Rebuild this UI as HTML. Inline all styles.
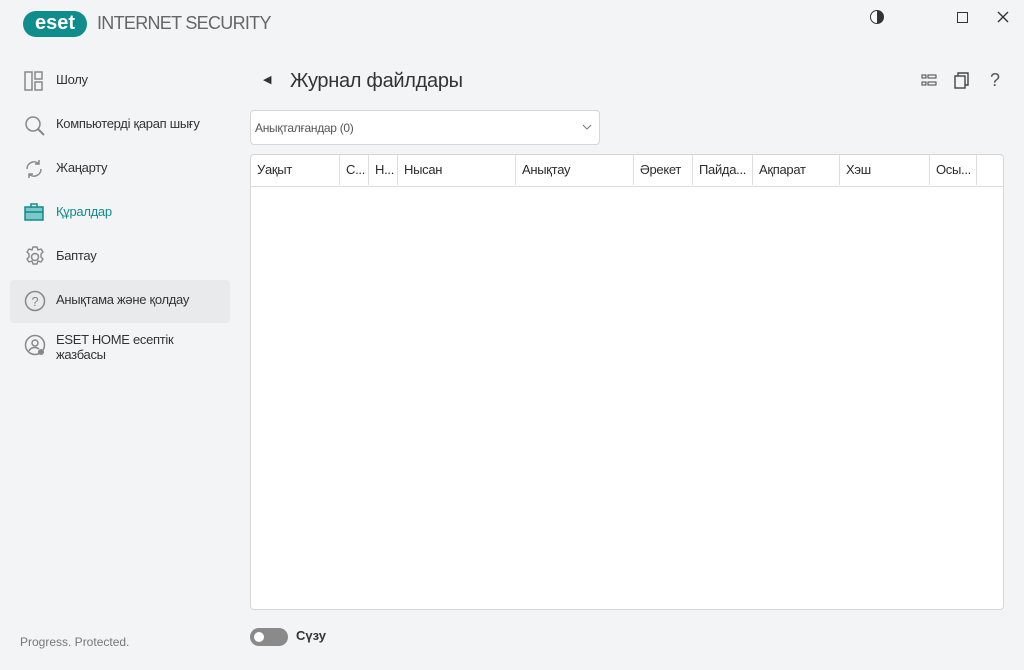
<!DOCTYPE html><html><head><meta charset="utf-8"><style>
body{margin:0;width:1024px;height:670px;background:#f3f4f6;font-family:"Liberation Sans",sans-serif;position:relative;overflow:hidden;color:#2b2b2b}
.a{position:absolute}
.nav{position:absolute;left:56px;font-size:13px;color:#333;letter-spacing:-0.3px}
.ic{position:absolute;left:24px}
.th{position:absolute;top:0;height:30px;line-height:30px;font-size:13px;border-right:1px solid #ddd;padding-left:6px;box-sizing:border-box;overflow:hidden;white-space:nowrap;letter-spacing:-0.3px}
</style></head><body>
<div class="a" style="left:23px;top:11px;width:64px;height:26px;background:#0f8c8c;border-radius:13px;color:#fff;font-weight:bold;font-size:20px;line-height:25px;text-align:center">eset</div>
<div class="a" style="left:97px;top:13px;font-size:18px;color:#666;letter-spacing:-0.7px">INTERNET SECURITY</div>
<div class="a" style="left:870px;top:10px;width:12px;height:12px;border:1.5px solid #333;border-radius:50%;background:linear-gradient(90deg,#fff 50%,#333 50%)"></div>
<div class="a" style="left:957px;top:12px;width:9px;height:9px;border:1.5px solid #333"></div>
<svg class="a" style="left:997px;top:11px" width="12" height="12"><path d="M1 1L11 11M11 1L1 11" stroke="#333" stroke-width="1.4"/></svg>

<svg class="ic" style="top:71px" width="20" height="20"><rect x="1" y="1" width="7" height="18" fill="none" stroke="#888" stroke-width="1.5"/><rect x="11" y="1" width="7" height="7" fill="none" stroke="#888" stroke-width="1.5"/><rect x="11" y="11" width="7" height="8" fill="none" stroke="#888" stroke-width="1.5"/></svg>
<div class="nav" style="top:72px">Шолу</div>
<svg class="ic" style="top:115px" width="22" height="22"><circle cx="9" cy="9" r="7" fill="none" stroke="#888" stroke-width="1.5"/><line x1="14" y1="14" x2="20" y2="20" stroke="#888" stroke-width="2"/></svg>
<div class="nav" style="top:116px">Компьютерді қарап шығу</div>
<svg class="ic" style="top:159px" width="20" height="20"><path d="M3 10a7 7 0 0 1 12-5M17 10a7 7 0 0 1-12 5" fill="none" stroke="#888" stroke-width="1.5"/><path d="M15 1v4h-4M5 19v-4h4" fill="none" stroke="#888" stroke-width="1.5"/></svg>
<div class="nav" style="top:160px">Жаңарту</div>
<svg class="ic" style="top:202px" width="20" height="20"><rect x="1" y="5" width="18" height="13" fill="#7cc8c8" stroke="#0f8c8c" stroke-width="1.5"/><path d="M7 5V2h6v3M1 10h18" fill="none" stroke="#0f8c8c" stroke-width="1.5"/></svg>
<div class="nav" style="top:204px;color:#0f8c8c">Құралдар</div>
<svg class="ic" style="top:246px" width="22" height="22"><path d="M9 1h4l1 3 3-1 2 3-2 2 0 3 2 2-2 3-3-1-1 3h-4l-1-3-3 1-2-3 2-2 0-3-2-2 2-3 3 1z" fill="none" stroke="#888" stroke-width="1.4" stroke-linejoin="round"/><circle cx="11" cy="11" r="3.5" fill="none" stroke="#888" stroke-width="1.5"/></svg>
<div class="nav" style="top:248px">Баптау</div>
<div class="a" style="left:10px;top:280px;width:220px;height:43px;background:#e9eaec;border-radius:4px"></div>
<svg class="ic" style="top:290px" width="22" height="22"><circle cx="11" cy="11" r="9.5" fill="none" stroke="#888" stroke-width="1.5"/><text x="11" y="16" font-size="13" text-anchor="middle" fill="#888" font-family="Liberation Sans">?</text></svg>
<div class="nav" style="top:292px">Анықтама және қолдау</div>
<svg class="ic" style="top:334px" width="22" height="22"><circle cx="11" cy="11" r="9.5" fill="none" stroke="#888" stroke-width="1.5"/><circle cx="11" cy="9" r="3" fill="none" stroke="#888" stroke-width="1.5"/><path d="M5 17a6 5 0 0 1 10-2" fill="none" stroke="#888" stroke-width="1.5"/><circle cx="17" cy="18" r="3" fill="#888"/></svg>
<div class="nav" style="top:332px;line-height:15px">ESET HOME есептік<br>жазбасы</div>
<div class="a" style="left:20px;top:635px;font-size:12px;color:#777">Progress. Protected.</div>

<div class="a" style="left:263px;top:73px;font-size:11px;color:#333">◀</div>
<div class="a" style="left:290px;top:70px;font-size:20px;color:#333;letter-spacing:-0.3px">Журнал файлдары</div>
<svg class="a" style="left:921px;top:74px" width="16" height="14"><rect x="1" y="1" width="4" height="3" fill="none" stroke="#444"/><rect x="7" y="1" width="8" height="3" fill="none" stroke="#444"/><rect x="1" y="8" width="4" height="3" fill="none" stroke="#444"/><rect x="7" y="8" width="8" height="3" fill="none" stroke="#444"/></svg>
<svg class="a" style="left:954px;top:72px" width="16" height="17"><rect x="1" y="4" width="10" height="12" fill="none" stroke="#444" stroke-width="1.4"/><path d="M4 4V1h10v12h-3" fill="none" stroke="#444" stroke-width="1.4"/></svg>
<div class="a" style="left:990px;top:70px;font-size:18px;color:#555">?</div>

<div class="a" style="left:250px;top:110px;width:348px;height:33px;background:#fff;border:1px solid #d6d6d6;border-radius:4px"><span style="position:absolute;left:4px;top:10px;font-size:12px;color:#555;letter-spacing:-0.3px">Анықталғандар (0)</span><svg style="position:absolute;right:7px;top:13px" width="10" height="6"><path d="M1 1L5 5L9 1" fill="none" stroke="#777" stroke-width="1"/></svg></div>

<div class="a" style="left:250px;top:154px;width:752px;height:454px;background:#fff;border:1px solid #d6d6d6;border-radius:4px;overflow:hidden">
<div class="a" style="left:0;top:0;width:752px;height:31px;border-bottom:1px solid #ddd">
<div class="th" style="left:0;width:89px">Уақыт</div>
<div class="th" style="left:89px;width:29px">С...</div>
<div class="th" style="left:118px;width:29px">Н...</div>
<div class="th" style="left:147px;width:118px">Нысан</div>
<div class="th" style="left:265px;width:118px">Анықтау</div>
<div class="th" style="left:383px;width:59px">Әрекет</div>
<div class="th" style="left:442px;width:60px">Пайда...</div>
<div class="th" style="left:502px;width:87px">Ақпарат</div>
<div class="th" style="left:589px;width:90px">Хэш</div>
<div class="th" style="left:679px;width:47px">Осы...</div>
</div></div>

<div class="a" style="left:250px;top:628px;width:38px;height:18px;background:#8a8a8a;border-radius:9px"><div style="position:absolute;left:4px;top:4px;width:10px;height:10px;background:#fff;border-radius:50%"></div></div>
<div class="a" style="left:296px;top:628px;font-size:13px;font-weight:bold;color:#333">Сүзу</div>
</body></html>
